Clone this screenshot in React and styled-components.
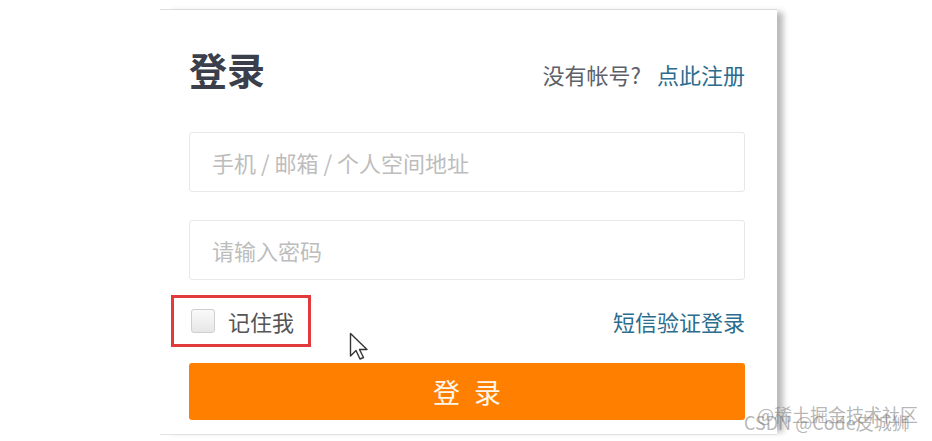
import React from "react";
import styled, { createGlobalStyle } from "styled-components";

const Global = createGlobalStyle`
  html, body { margin: 0; padding: 0; background: #fff; }
  body { font-family: "Noto Sans CJK SC", "Noto Sans", sans-serif; }
  * { box-sizing: border-box; }
`;

const Page = styled.div`
  position: relative;
  width: 932px;
  height: 441px;
  overflow: hidden;
  background: #fff;
  padding: 9px 0 0 160px;
`;

const Card = styled.div`
  width: 617px;
  height: 426px;
  background: #fff;
  border-top: 1px solid #dcdcdc;
  border-bottom: 1px solid #e2e2e2;
  box-shadow: 9px 0 6px -3px rgba(0, 0, 0, 0.28);
  padding: 38px 32px 0 29px;
  display: flex;
  flex-direction: column;
`;

const Header = styled.div`
  display: flex;
  justify-content: space-between;
  align-items: flex-end;
  height: 42px;
`;

const Title = styled.h1`
  margin: 0;
  font-size: 38px;
  line-height: 42px;
  font-weight: 700;
  color: #3a3f4b;
`;

const Hint = styled.div`
  font-size: 22px;
  line-height: 28px;
  color: #5b6069;
  display: flex;
  gap: 16px;
  margin-bottom: 2px;
`;

const Link = styled.a`
  color: #2c6d8e;
  text-decoration: none;
`;

const Field = styled.input`
  width: 100%;
  height: 60px;
  border: 1px solid #e8e8e8;
  border-radius: 3px;
  padding: 0 22px;
  font-family: inherit;
  font-size: 22px;
  color: #333;
  outline: none;
  margin-top: ${(p) => p.$top}px;
  &::placeholder {
    color: #bdbdbd;
  }
`;

const OptionRow = styled.div`
  display: flex;
  justify-content: space-between;
  align-items: center;
  margin-top: 15px;
  height: 52px;
`;

const Remember = styled.label`
  display: flex;
  align-items: center;
  gap: 13px;
  margin-left: -18px;
  height: 52px;
  padding: 0 14px 0 17px;
  border: 3px solid #e23a3c;
  font-size: 22px;
  color: #555;
`;

const Box = styled.span`
  width: 24px;
  height: 24px;
  border: 1px solid #cfcfcf;
  border-radius: 3px;
  background: linear-gradient(#fafafa, #e6e6e6);
`;

const SmsLink = styled.a`
  font-size: 22px;
  color: #2c6d8e;
  text-decoration: none;
`;

const Submit = styled.button`
  margin-top: 16px;
  width: 100%;
  height: 57px;
  border: none;
  border-radius: 3px;
  background: #ff7f00;
  color: #fff6ea;
  font-family: inherit;
  font-size: 27px;
  letter-spacing: 4px;
  padding: 0 0 0 4px;
`;

const Cursor = styled.svg`
  position: absolute;
  left: 349px;
  top: 332px;
`;

const Watermark = styled.div`
  position: absolute;
  font-family: "Noto Sans CJK SC", sans-serif;
  font-size: ${(p) => p.$size}px;
  line-height: 1;
  color: rgba(120, 120, 120, 0.55);
  left: ${(p) => p.$x}px;
  top: ${(p) => p.$y}px;
  white-space: nowrap;
`;

export default function App() {
  return (
    <>
      <Global />
      <Page>
        <Card>
          <Header>
            <Title>登录</Title>
            <Hint>
              <span>没有帐号?</span>
              <Link href="#">点此注册</Link>
            </Hint>
          </Header>
          <Field $top={42} placeholder="手机 / 邮箱 / 个人空间地址" />
          <Field $top={28} placeholder="请输入密码" />
          <OptionRow>
            <Remember>
              <Box />
              记住我
            </Remember>
            <SmsLink href="#">短信验证登录</SmsLink>
          </OptionRow>
          <Submit>登 录</Submit>
        </Card>
        <Cursor width="22" height="30" viewBox="0 0 22 30">
          <path
            d="M1.5 1.5 L1.5 24 L7 18.5 L11 27 L14.5 25.5 L10.5 17.5 L18 17.5 Z"
            fill="#fff"
            stroke="#333"
            strokeWidth="1.4"
            strokeLinejoin="round"
          />
        </Cursor>
        <Watermark $x={757} $y={405} $size={18}>@稀土掘金技术社区</Watermark>
        <Watermark $x={744} $y={413} $size={18}>CSDN @Code皮城狮</Watermark>
      </Page>
    </>
  );
}
